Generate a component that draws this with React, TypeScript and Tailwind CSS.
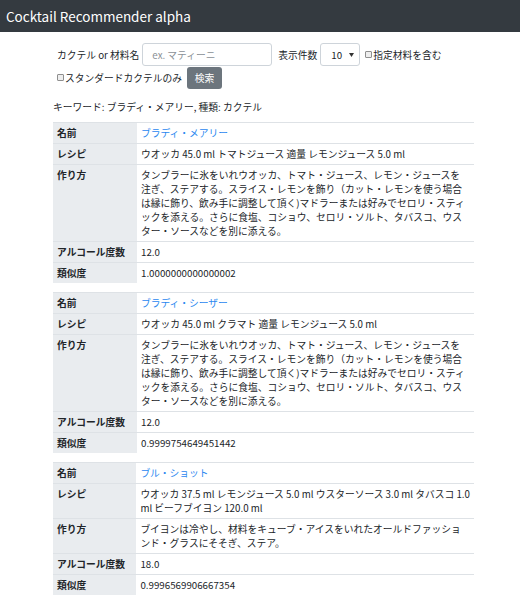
import { FC } from 'react';

type Cocktail = {
  name: string;
  recipe: string[];
  method: string[];
  alcohol: string;
  similarity: string;
};

const method1 = [
  'タンブラーに氷をいれウオッカ、トマト・ジュース、レモン・ジュースを',
  '注ぎ、ステアする。スライス・レモンを飾り（カット・レモンを使う場合',
  'は縁に飾り、飲み手に調整して頂く)マドラーまたは好みでセロリ・スティ',
  'ックを添える。さらに食塩、コショウ、セロリ・ソルト、タバスコ、ウス',
  'ター・ソースなどを別に添える。',
];

const cocktails: Cocktail[] = [
  {
    name: 'ブラディ・メアリー',
    recipe: ['ウオッカ 45.0 ml トマトジュース 適量 レモンジュース 5.0 ml'],
    method: method1,
    alcohol: '12.0',
    similarity: '1.0000000000000002',
  },
  {
    name: 'ブラディ・シーザー',
    recipe: ['ウオッカ 45.0 ml クラマト 適量 レモンジュース 5.0 ml'],
    method: method1,
    alcohol: '12.0',
    similarity: '0.9999754649451442',
  },
  {
    name: 'ブル・ショット',
    recipe: [
      'ウオッカ 37.5 ml レモンジュース 5.0 ml ウスターソース 3.0 ml タバスコ 1.0',
      'ml ビーフブイヨン 120.0 ml',
    ],
    method: [
      'ブイヨンは冷やし、材料をキューブ・アイスをいれたオールドファッショ',
      'ンド・グラスにそそぎ、ステア。',
    ],
    alcohol: '18.0',
    similarity: '0.9996569906667354',
  },
];

// each line is kept as in the reference, no reflow
const Lines: FC<{ lines: string[] }> = ({ lines }) => (
  <>
    {lines.map((l, i) => (
      <span key={i} className="block whitespace-nowrap">
        {l}
      </span>
    ))}
  </>
);

const Checkbox: FC = () => (
  <span className="inline-block w-[7px] h-[7px] border border-[#8f8f8f] bg-[#eeeeee] rounded-[1px] mr-[1px]" />
);

const Row: FC<{ label: string; children: React.ReactNode }> = ({ label, children }) => (
  <tr className="border-t border-[#dee2e6]">
    <th className="w-[84px] bg-[#e9ecef] text-left align-top font-bold px-[4px] py-[3px]">{label}</th>
    <td className="align-top px-[4px] py-[3px]">{children}</td>
  </tr>
);

export default function App() {
  return (
    <div className="min-h-[599px] bg-white text-[#212529] text-[9.75px] leading-[14px] font-['Noto_Sans_CJK_JP',sans-serif]">
      {/* Navbar */}
      <div className="h-[32px] bg-[#343a40] flex items-center px-[6px] pt-[1px]">
        <span className="text-white text-[13.5px] leading-none">Cocktail Recommender alpha</span>
      </div>

      <div className="pl-[53px] pt-[11px]">
        {/* Search form */}
        <div className="pl-[4px]">
          <div className="flex items-center h-[23px]">
            <span>カクテル or 材料名</span>
            <div className="ml-[3px] w-[130px] h-[23px] border border-[#ced4da] rounded-[3px] flex items-center pl-[9px] text-[#8a9096]">
              ex. マティーニ
            </div>
            <span className="ml-[6px]">表示件数</span>
            <div className="ml-[3px] w-[40px] h-[23px] border border-[#ced4da] rounded-[3px] flex items-center pl-[10px] pr-[5px] justify-between">
              <span>10</span>
              <svg width="5" height="4" viewBox="0 0 5 4">
                <path d="M0 0h5L2.5 4z" fill="#333" />
              </svg>
            </div>
            <span className="ml-[5px] flex items-center">
              <Checkbox />
              指定材料を含む
            </span>
          </div>
          <div className="flex items-center h-[23px]">
            <span className="flex items-center">
              <Checkbox />
              スタンダードカクテルのみ
            </span>
            <button className="ml-[5px] w-[35px] h-[22px] bg-[#6c757d] text-white rounded-[3px] text-[9.75px]">
              検索
            </button>
          </div>
        </div>

        {/* Keyword */}
        <p className="mt-[11px] mb-[8px]">キーワード: ブラディ・メアリー, 種類: カクテル</p>

        {/* Results */}
        <div className="flex flex-col gap-[9px] pb-[8px]">
          {cocktails.map((c) => (
            <table key={c.name} className="w-[421px] border-collapse">
              <tbody>
                <Row label="名前">
                  <a className="text-[#2b88f0]">{c.name}</a>
                </Row>
                <Row label="レシピ">
                  <Lines lines={c.recipe} />
                </Row>
                <Row label="作り方">
                  <Lines lines={c.method} />
                </Row>
                <Row label="アルコール度数">{c.alcohol}</Row>
                <Row label="類似度">{c.similarity}</Row>
              </tbody>
            </table>
          ))}
        </div>
      </div>
    </div>
  );
}
